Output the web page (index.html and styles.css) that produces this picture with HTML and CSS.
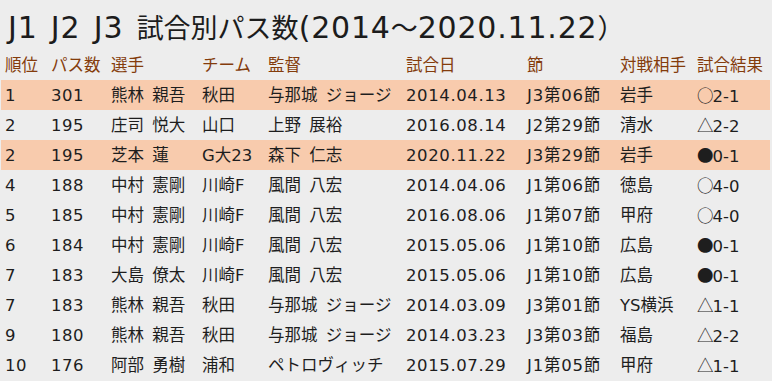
FILE: index.html
```html
<!DOCTYPE html>
<html lang="ja">
<head>
<meta charset="utf-8">
<title>J1 J2 J3 試合別パス数</title>
<link rel="stylesheet" href="styles.css">
</head>
<body>
<h1 class="title"><span class="lat">J1 J2 J3 </span><span class="cjk">試合別パス数</span><span class="lat">(2014</span><span class="cjk">～</span><span class="lat">2020.11.22</span><span class="cjk">）</span></h1>
<div class="table">
  <div class="row head">
    <div>順位</div><div>パス数</div><div>選手</div><div>チーム</div><div>監督</div><div>試合日</div><div>節</div><div>対戦相手</div><div>試合結果</div>
  </div>
  <div class="row hl">
    <div>1</div><div>301</div><div>熊林 親吾</div><div>秋田</div><div>与那城 ジョージ</div><div>2014.04.13</div><div>J3第06節</div><div>岩手</div><div><span class="mk">○</span>2-1</div>
  </div>
  <div class="row">
    <div>2</div><div>195</div><div>庄司 悦大</div><div>山口</div><div>上野 展裕</div><div>2016.08.14</div><div>J2第29節</div><div>清水</div><div><span class="mk">△</span>2-2</div>
  </div>
  <div class="row hl">
    <div>2</div><div>195</div><div>芝本 蓮</div><div>G大23</div><div>森下 仁志</div><div>2020.11.22</div><div>J3第29節</div><div>岩手</div><div><span class="mk">●</span>0-1</div>
  </div>
  <div class="row">
    <div>4</div><div>188</div><div>中村 憲剛</div><div>川崎F</div><div>風間 八宏</div><div>2014.04.06</div><div>J1第06節</div><div>徳島</div><div><span class="mk">○</span>4-0</div>
  </div>
  <div class="row">
    <div>5</div><div>185</div><div>中村 憲剛</div><div>川崎F</div><div>風間 八宏</div><div>2016.08.06</div><div>J1第07節</div><div>甲府</div><div><span class="mk">○</span>4-0</div>
  </div>
  <div class="row">
    <div>6</div><div>184</div><div>中村 憲剛</div><div>川崎F</div><div>風間 八宏</div><div>2015.05.06</div><div>J1第10節</div><div>広島</div><div><span class="mk">●</span>0-1</div>
  </div>
  <div class="row">
    <div>7</div><div>183</div><div>大島 僚太</div><div>川崎F</div><div>風間 八宏</div><div>2015.05.06</div><div>J1第10節</div><div>広島</div><div><span class="mk">●</span>0-1</div>
  </div>
  <div class="row">
    <div>7</div><div>183</div><div>熊林 親吾</div><div>秋田</div><div>与那城 ジョージ</div><div>2014.03.09</div><div>J3第01節</div><div>YS横浜</div><div><span class="mk">△</span>1-1</div>
  </div>
  <div class="row">
    <div>9</div><div>180</div><div>熊林 親吾</div><div>秋田</div><div>与那城 ジョージ</div><div>2014.03.23</div><div>J3第03節</div><div>福島</div><div><span class="mk">△</span>2-2</div>
  </div>
  <div class="row">
    <div>10</div><div>176</div><div>阿部 勇樹</div><div>浦和</div><div>ペトロヴィッチ</div><div>2015.07.29</div><div>J1第05節</div><div>甲府</div><div><span class="mk">△</span>1-1</div>
  </div>
</div>
</body>
</html>
```
FILE: styles.css
```css
html, body {
  margin: 0;
  padding: 0;
  background: #ededed;
}
body {
  width: 772px;
  height: 381px;
  overflow: hidden;
  font-family: "DejaVu Sans", "Noto Sans CJK JP", sans-serif;
  color: #1e1e1e;
}
.title {
  margin: 0;
  height: 50px;
  box-sizing: border-box;
  padding: 4px 0 0 8px;
  line-height: 46px;
  font-weight: normal;
  white-space: nowrap;
  color: #1c1c1c;
  word-spacing: 3px;
}
.title .lat {
  font-family: "DejaVu Sans", sans-serif;
  font-size: 30px;
  letter-spacing: 0.8px;
}
.title .cjk {
  font-family: "Noto Sans CJK JP", sans-serif;
  font-size: 27px;
}
.table {
  margin: 0 2px 0 1px;
}
.row {
  display: grid;
  grid-template-columns: 46px 60px 91px 66px 138px 121px 93px 77px 1fr;
  height: 30px;
  line-height: 31px;
  padding-left: 4px;
  font-size: 16.5px;
  white-space: nowrap;
  word-spacing: 3px;
}
.row > :nth-child(1),
.row > :nth-child(2) {
  letter-spacing: 0.5px;
}
.row > :nth-child(6) {
  letter-spacing: 0.6px;
}
.row > :nth-child(7) {
  letter-spacing: 0.8px;
}
.row.head > * {
  letter-spacing: 0;
}
.row.head {
  color: #843c0c;
}
.row.hl {
  background: #f8cbad;
}
.mk {
  font-family: "Noto Sans CJK JP", sans-serif;
  word-spacing: 0;
  letter-spacing: -1px;
}
```
